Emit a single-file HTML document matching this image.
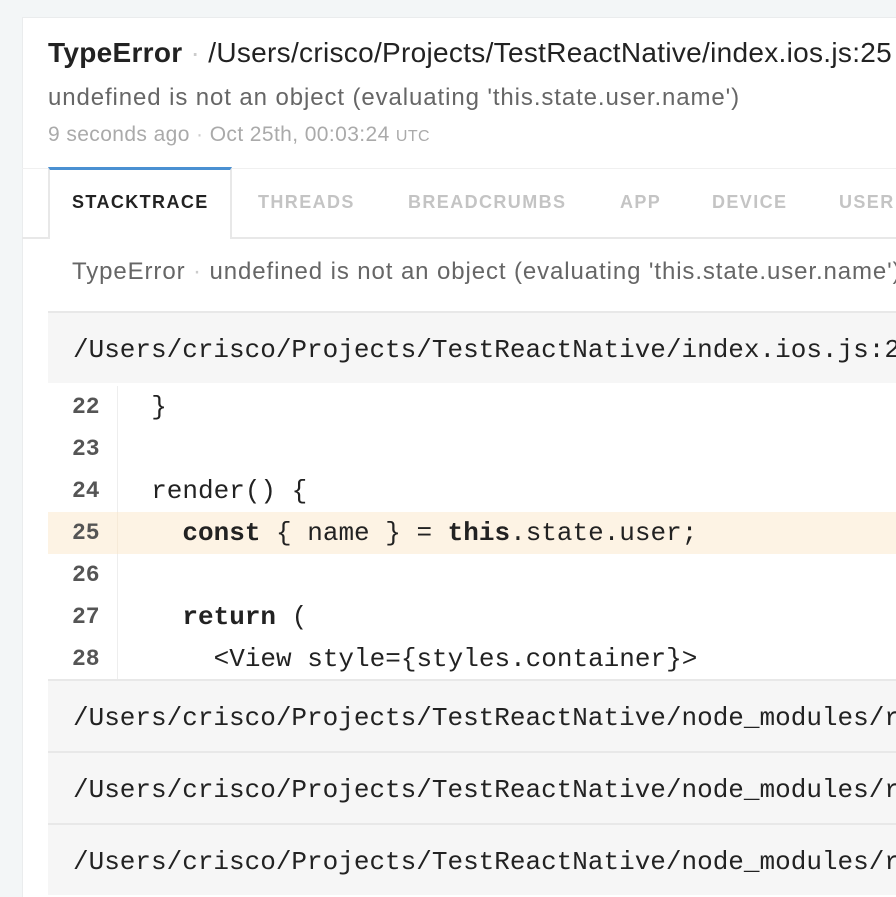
<!DOCTYPE html>
<html><head><meta charset="utf-8"><style>
*{margin:0;padding:0;box-sizing:border-box}
html{overflow:hidden}
body{width:896px;height:897px;background:#f3f6f7;overflow:hidden;position:relative;font-family:"Liberation Sans",sans-serif}
.wrap{position:absolute;left:0;top:0;width:896px;height:897px;overflow:hidden}
.card{position:absolute;left:22px;top:17px;width:874px;height:880px;background:#fff;border-left:1px solid #eaeced;border-top:1px solid #eaeced}
.a{position:absolute;white-space:nowrap}
.dot{color:#ccc}
.tab{position:absolute;top:192px;font-size:18px;font-weight:bold;letter-spacing:1.4px;color:#c4c4c4}
.fh{position:absolute;left:48px;width:848px;height:72px;background:#f6f6f6;border-top:2px solid #e8e8e8;font-family:"Liberation Mono",monospace;font-size:26px;color:#222;padding:22px 0 0 25px;white-space:nowrap;overflow:hidden}
.ln{position:absolute;left:48px;width:848px;height:42px;font-family:"Liberation Mono",monospace;white-space:pre;overflow:hidden}
.ln .n{position:absolute;left:0;width:70px;height:42px;border-right:1px solid #eee;color:#555;font-size:23px;font-weight:bold;padding:8px 0 0 24px}
.ln .c{position:absolute;left:72px;top:6px;font-size:26px;color:#222}
</style></head><body><div class="wrap">
<div class="card"></div>
<div class="a" style="left:48px;top:37px;font-size:28px;letter-spacing:0.3px;color:#222"><b>TypeError</b> <span class="dot">·</span> /Users/crisco/Projects/TestReactNative/index.ios.js:25</div>
<div class="a" style="left:48px;top:84px;font-size:24px;letter-spacing:0.9px;color:#666">undefined is not an object (evaluating 'this.state.user.name')</div>
<div class="a" style="left:48px;top:123px;font-size:21px;letter-spacing:0.4px;color:#aaa">9 seconds ago <span class="dot">·</span> Oct 25th, 00:03:24 <span style="font-size:16px">UTC</span></div>
<div class="a" style="left:22px;top:168px;width:874px;height:1px;background:#f0f0f0"></div>
<div class="a" style="left:22px;top:237px;width:874px;height:2px;background:#e8e8e8"></div>
<div class="a" style="left:48px;top:167px;width:184px;height:72px;background:#fff;border-left:2px solid #e8e8e8;border-right:2px solid #e8e8e8;border-top:3px solid #4a90d2"></div>
<div class="tab" style="left:72px;color:#222">STACKTRACE</div>
<div class="tab" style="left:258px">THREADS</div>
<div class="tab" style="left:408px">BREADCRUMBS</div>
<div class="tab" style="left:620px">APP</div>
<div class="tab" style="left:712px">DEVICE</div>
<div class="tab" style="left:839px">USER</div>
<div class="a" style="left:72px;top:258px;font-size:24px;letter-spacing:0.9px;color:#666">TypeError <span class="dot">·</span> undefined is not an object (evaluating 'this.state.user.name')</div>
<div class="fh" style="top:311px">/Users/crisco/Projects/TestReactNative/index.ios.js:25</div>
<div class="ln" style="top:386px"><div class="n">22</div><div class="c">  }</div></div>
<div class="ln" style="top:428px"><div class="n">23</div><div class="c"> </div></div>
<div class="ln" style="top:470px"><div class="n">24</div><div class="c">  render() {</div></div>
<div class="ln" style="top:512px;background:#fdf3e4"><div class="n" style="border-color:#f6ead8">25</div><div class="c">    <b>const</b> { name } = <b>this</b>.state.user;</div></div>
<div class="ln" style="top:554px"><div class="n">26</div><div class="c"> </div></div>
<div class="ln" style="top:596px"><div class="n">27</div><div class="c">    <b>return</b> (</div></div>
<div class="ln" style="top:638px"><div class="n">28</div><div class="c">      &lt;View style={styles.container}&gt;</div></div>
<div class="fh" style="top:679px">/Users/crisco/Projects/TestReactNative/node_modules/react</div>
<div class="fh" style="top:751px">/Users/crisco/Projects/TestReactNative/node_modules/react</div>
<div class="fh" style="top:823px">/Users/crisco/Projects/TestReactNative/node_modules/react</div>
</div></body></html>
